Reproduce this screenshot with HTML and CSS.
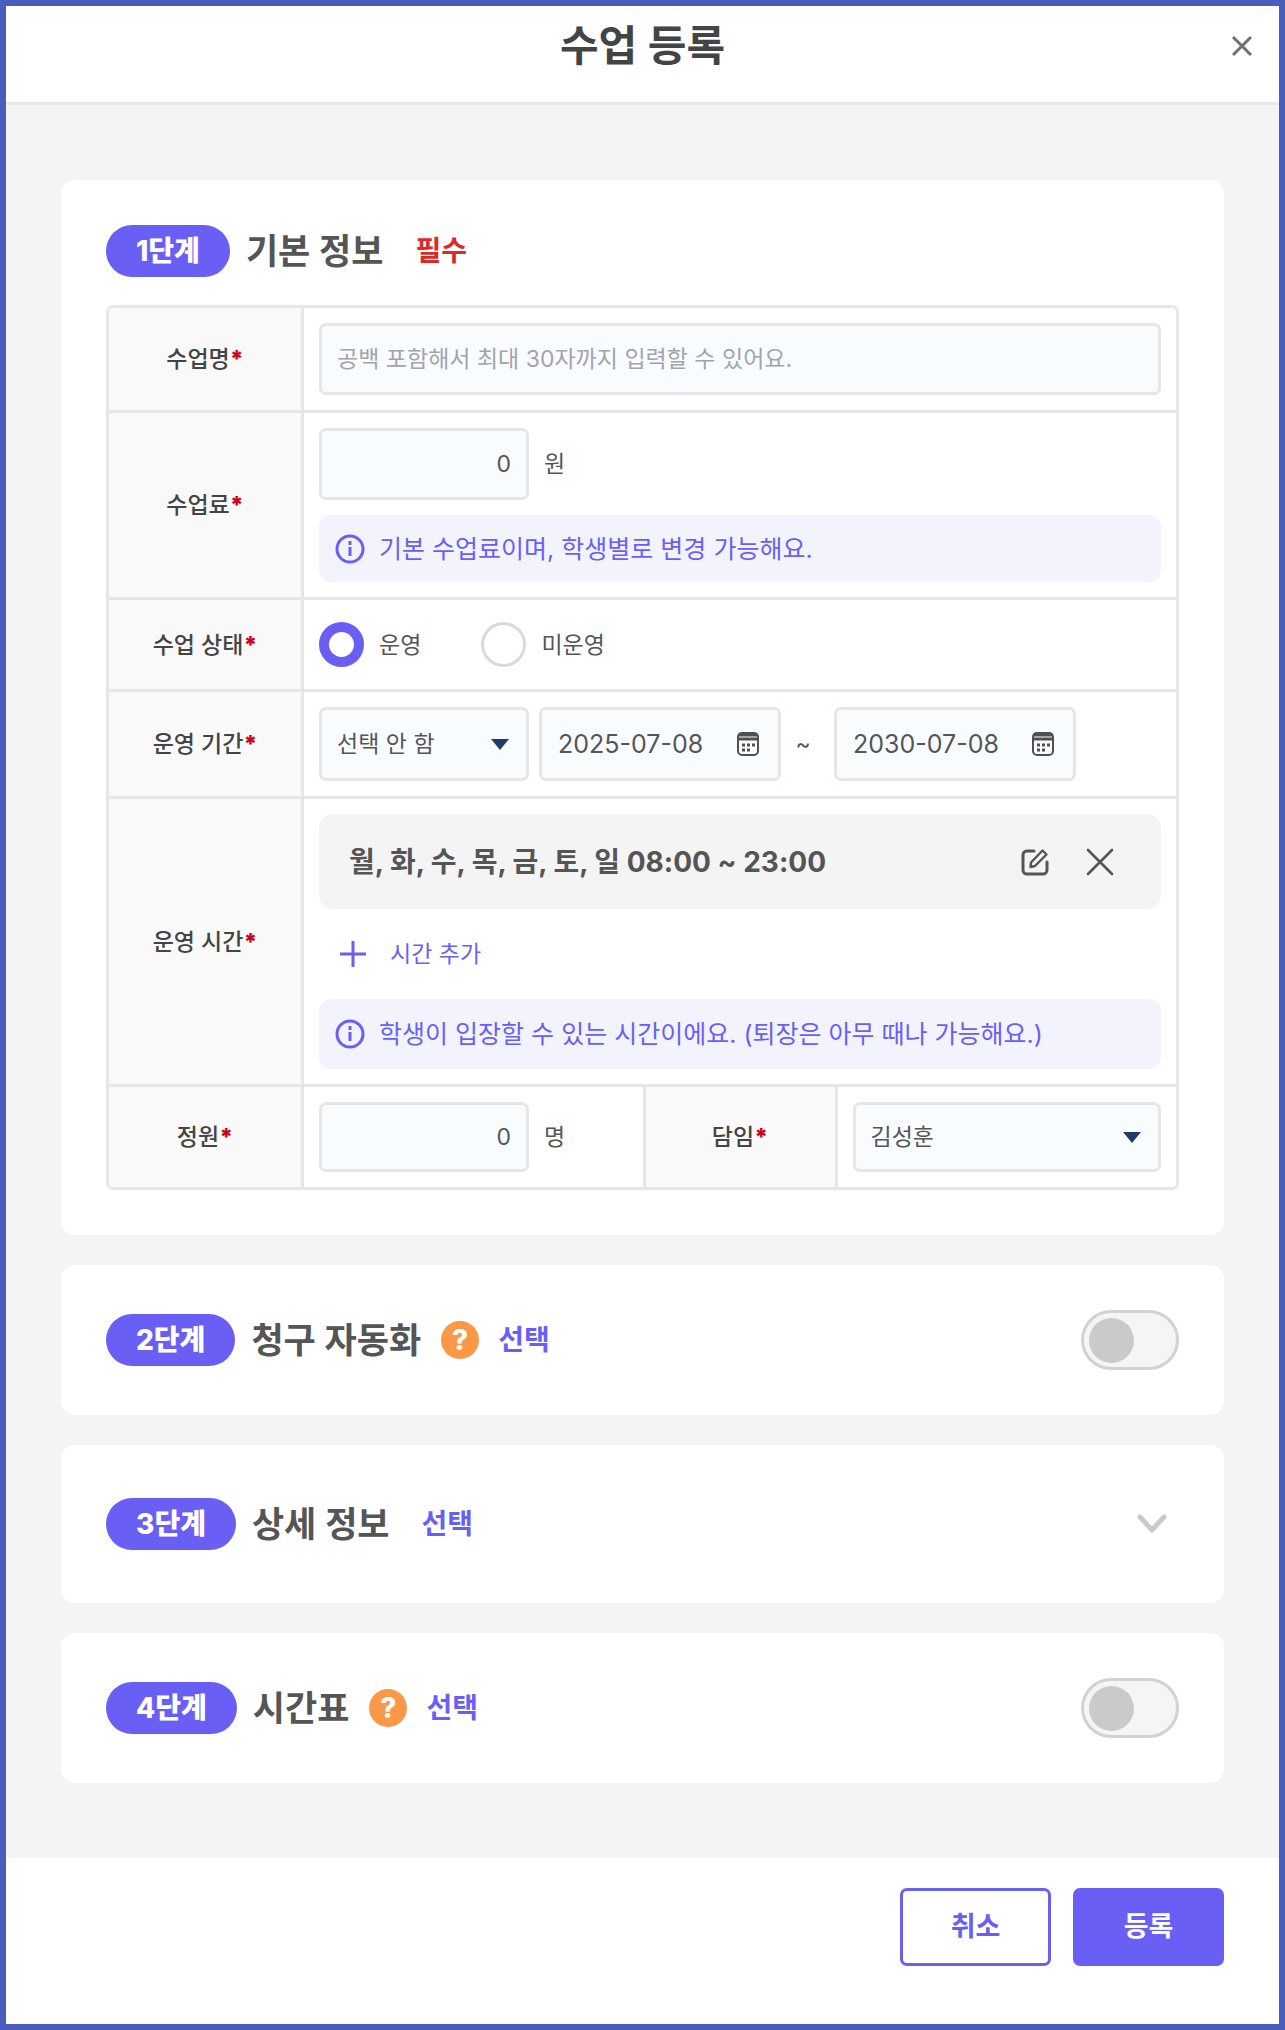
FILE: index.html
```
<!DOCTYPE html>
<html lang="ko">
<head>
    <meta charset="UTF-8">
    <meta name="viewport" content="width=device-width, initial-scale=1.0">
    <title>수업 등록</title>
    <link rel="stylesheet" href="styles.css">
</head>
<body>
    <form class="modal">
        <header class="modal-header">
            <h1>수업 등록</h1>
            <button type="button" class="icon-button close-button" aria-label="닫기">
                <svg width="22" height="22" viewBox="0 0 22 22" fill="none" stroke="#707070" stroke-width="3"><path d="M2 2l18 18M20 2L2 20"/></svg>
            </button>
        </header>

        <main class="modal-body">
            <section class="card">
                <div class="card-header opened">
                    <span class="step">1단계</span>
                    <h2>기본 정보</h2>
                    <span class="tag required">필수</span>
                </div>
                <div class="table-wrap">
                    <table class="form-table">
                        <colgroup>
                            <col class="col-label">
                            <col>
                            <col class="col-label">
                            <col>
                        </colgroup>
                        <tr>
                            <th scope="row"><label for="class-name">수업명<em>*</em></label></th>
                            <td colspan="3"><input type="text" id="class-name" class="field full" placeholder="공백 포함해서 최대 30자까지 입력할 수 있어요."></td>
                        </tr>
                        <tr>
                            <th scope="row"><label for="fee">수업료<em>*</em></label></th>
                            <td colspan="3">
                                <div class="row unit-row">
                                    <input type="text" id="fee" class="field number" value="0">
                                    <span>원</span>
                                </div>
                                <p class="info fee-info">
                                    <svg width="30" height="30" viewBox="0 0 30 30" fill="none" stroke="#6a5ff5" stroke-width="3"><circle cx="15" cy="15" r="13"/><path d="M15 13v9M15 7v4"/></svg>
                                    기본 수업료이며, 학생별로 변경 가능해요.
                                </p>
                            </td>
                        </tr>
                        <tr>
                            <th scope="row">수업 상태<em>*</em></th>
                            <td colspan="3">
                                <div class="row radio-row">
                                    <label class="radio"><input type="radio" name="status" checked>운영</label>
                                    <label class="radio"><input type="radio" name="status">미운영</label>
                                </div>
                            </td>
                        </tr>
                        <tr>
                            <th scope="row"><label for="period">운영 기간<em>*</em></label></th>
                            <td colspan="3">
                                <div class="row period-row">
                                    <div class="select">
                                        <select id="period" class="field tall">
                                            <option>선택 안 함</option>
                                        </select>
                                        <svg width="18" height="11" viewBox="0 0 18 11" fill="#1f3b68"><path d="M0 0h18L9 11z"/></svg>
                                    </div>
                                    <div class="date">
                                        <input type="text" value="2025-07-08" aria-label="시작일">
                                        <button type="button" class="icon-button" aria-label="시작일 선택">
                                            <svg width="24" height="26" viewBox="0 0 24 26" fill="none" stroke="#505050" stroke-width="2"><rect x="2" y="2" width="20" height="22" rx="4"/><path d="M2 4h20M2 8h20" stroke-width="3"/><path d="M6 14h3M11 14h3M16 14h3M6 19h3M11 19h3" stroke-width="3"/></svg>
                                        </button>
                                    </div>
                                    <span class="tilde">~</span>
                                    <div class="date">
                                        <input type="text" value="2030-07-08" aria-label="종료일">
                                        <button type="button" class="icon-button" aria-label="종료일 선택">
                                            <svg width="24" height="26" viewBox="0 0 24 26" fill="none" stroke="#505050" stroke-width="2"><rect x="2" y="2" width="20" height="22" rx="4"/><path d="M2 4h20M2 8h20" stroke-width="3"/><path d="M6 14h3M11 14h3M16 14h3M6 19h3M11 19h3" stroke-width="3"/></svg>
                                        </button>
                                    </div>
                                </div>
                            </td>
                        </tr>
                        <tr>
                            <th scope="row">운영 시간<em>*</em></th>
                            <td colspan="3">
                                <div class="time-item">
                                    <strong>월, 화, 수, 목, 금, 토, 일 08:00 ~ 23:00</strong>
                                    <button type="button" class="icon-button" aria-label="수정">
                                        <svg width="28" height="28" viewBox="0 0 28 28" fill="none" stroke="#555" stroke-width="3" stroke-linejoin="round" stroke-linecap="round"><path d="M13 3H6a4 4 0 0 0-4 4v15a4 4 0 0 0 4 4h16a4 4 0 0 0 4-4v-8"/><path d="M10 14.500L21.500 2.500l4 4L14 18l-4.500 1z" stroke-width="2.400"/></svg>
                                    </button>
                                    <button type="button" class="icon-button" aria-label="삭제">
                                        <svg width="28" height="28" viewBox="0 0 28 28" fill="none" stroke="#555" stroke-width="2.600" stroke-linecap="round"><path d="M2 2l24 24M26 2L2 26"/></svg>
                                    </button>
                                </div>
                                <button type="button" class="add-time">
                                    <svg width="26" height="26" viewBox="0 0 26 26" fill="none" stroke="#6a5ff5" stroke-width="3"><path d="M13 0v26M0 13h26"/></svg>
                                    시간 추가
                                </button>
                                <p class="info">
                                    <svg width="30" height="30" viewBox="0 0 30 30" fill="none" stroke="#6a5ff5" stroke-width="3"><circle cx="15" cy="15" r="13"/><path d="M15 13v9M15 7v4"/></svg>
                                    학생이 입장할 수 있는 시간이에요. (퇴장은 아무 때나 가능해요.)
                                </p>
                            </td>
                        </tr>
                        <tr>
                            <th scope="row"><label for="capacity">정원<em>*</em></label></th>
                            <td>
                                <div class="row unit-row">
                                    <input type="text" id="capacity" class="field number short" value="0">
                                    <span>명</span>
                                </div>
                            </td>
                            <th scope="row" class="inner"><label for="teacher">담임<em>*</em></label></th>
                            <td>
                                <div class="select full">
                                    <select id="teacher" class="field short">
                                        <option>김성훈</option>
                                    </select>
                                    <svg width="18" height="11" viewBox="0 0 18 11" fill="#1f3b68"><path d="M0 0h18L9 11z"/></svg>
                                </div>
                            </td>
                        </tr>
                    </table>
                </div>
            </section>

            <section class="card">
                <div class="card-header">
                    <span class="step">2단계</span>
                    <h2>청구 자동화</h2>
                    <button type="button" class="help" aria-label="청구 자동화 도움말">?</button>
                    <span class="tag">선택</span>
                    <input type="checkbox" class="toggle" aria-label="청구 자동화 사용">
                </div>
            </section>

            <section class="card">
                <div class="card-header folded">
                    <span class="step">3단계</span>
                    <h2>상세 정보</h2>
                    <span class="tag">선택</span>
                    <button type="button" class="icon-button expand" aria-label="펼치기">
                        <svg width="30" height="20" viewBox="0 0 30 20" fill="none" stroke="#c9c9c9" stroke-width="5" stroke-linecap="round" stroke-linejoin="round"><path d="M3 3l12 13L27 3"/></svg>
                    </button>
                </div>
            </section>

            <section class="card">
                <div class="card-header">
                    <span class="step">4단계</span>
                    <h2>시간표</h2>
                    <button type="button" class="help" aria-label="시간표 도움말">?</button>
                    <span class="tag">선택</span>
                    <input type="checkbox" class="toggle" aria-label="시간표 사용">
                </div>
            </section>
        </main>

        <footer class="modal-footer">
            <button type="button" class="button">취소</button>
            <button type="submit" class="button primary">등록</button>
        </footer>
    </form>
</body>
</html>
```
FILE: styles.css
```
/* Global Settings */
* {
    box-sizing: border-box;
    margin: 0;
    padding: 0;
}

body {
    font-family: Inter, 'Noto Sans CJK KR', sans-serif;
    font-size: 23px;
    line-height: 34px;
    color: #555;
}

button,
input,
select {
    font: inherit;
    color: inherit;
}

button {
    cursor: pointer;
}

svg {
    display: block;
    flex-shrink: 0;
}

.modal {
    display: flex;
    flex-direction: column;
    min-height: 100vh;
    border: 6px solid #4a5dbb;
    background-color: #fff;
}

.icon-button {
    border: none;
    background: none;
}

/* Header */
.modal-header {
    display: grid;
    grid-template-columns: 1fr auto 1fr;
    align-items: center;
    padding: 8px 26px 24px;
    border-bottom: 3px solid #e8e8e8;
}

.modal-header h1 {
    grid-column: 2;
    font-size: 42px;
    line-height: 64px;
    font-weight: 600;
    color: #444;
}

.close-button {
    justify-self: end;
}

.modal-body {
    display: flex;
    flex-direction: column;
    flex: 1;
    gap: 30px;
    padding: 75px 55px;
    background-color: #f4f4f4;
}

/* Cards */
.card {
    padding: 45px;
    border-radius: 14px;
    background-color: #fff;
}

.card-header {
    display: flex;
    align-items: center;
    min-height: 60px;
}

.card-header.opened {
    min-height: 50px;
    margin-bottom: 28px;
}

.card-header.folded {
    min-height: 68px;
}

.step {
    padding: 0 30px;
    border-radius: 26px;
    background-color: #6a5ff5;
    color: #fff;
    font-size: 28px;
    line-height: 52px;
    font-weight: 800;
}

.card-header h2 {
    margin-left: 16px;
    font-size: 35px;
    line-height: 52px;
    font-weight: 600;
}

.tag {
    margin-left: 32px;
    font-size: 28px;
    font-weight: 600;
    color: #6a5ff5;
}

.tag.required {
    color: #d92b2b;
}

.help {
    width: 38px;
    height: 38px;
    margin-left: 20px;
    border: none;
    border-radius: 50%;
    background-color: #fb9848;
    color: #fff;
    font-size: 28px;
    font-weight: 800;
    line-height: 38px;
}

.help + .tag {
    margin-left: 19px;
}

.toggle {
    appearance: none;
    display: flex;
    align-items: center;
    width: 98px;
    height: 60px;
    margin-left: auto;
    padding: 0 5px;
    border: 3px solid #d2d2d2;
    border-radius: 30px;
    background-color: #f5f5f5;
}

.toggle::before {
    content: "";
    width: 45px;
    height: 45px;
    border-radius: 50%;
    background-color: #cacaca;
}

.toggle:checked {
    justify-content: flex-end;
    background-color: #6a5ff5;
}

.expand {
    margin-left: auto;
    padding: 12px;
}

/* Form table */
.table-wrap {
    border: 3px solid #e6e6e6;
    border-radius: 7px;
    overflow: hidden;
}

.form-table {
    width: 100%;
    table-layout: fixed;
    border-spacing: 0;
}

.col-label {
    width: 18%;
}

.form-table th {
    background-color: #f9f9f9;
    font-weight: 500;
    color: #444;
}

.form-table td {
    padding: 15px;
    border-left: 3px solid #e6e6e6;
}

.form-table th.inner {
    border-left: 3px solid #e6e6e6;
}

.form-table tr + tr > * {
    border-top: 3px solid #e6e6e6;
}

.form-table em {
    font-style: normal;
    font-weight: 900;
    color: #d0021b;
}

.row {
    display: flex;
    align-items: center;
}

.unit-row {
    gap: 15px;
}

.field {
    display: block;
    width: 210px;
    height: 72px;
    padding: 0 15px;
    border: 3px solid #e6e6e6;
    border-radius: 7px;
    background-color: #f9fcff;
}

.field.tall {
    height: 74px;
}

.field.short {
    height: 70px;
}

.field.full {
    width: 100%;
}

.field.number {
    text-align: right;
}

.field::placeholder {
    color: #a3a3ad;
}

.select {
    position: relative;
}

.select .field {
    appearance: none;
}

.select.full .field {
    width: 100%;
}

.select svg {
    position: absolute;
    top: 50%;
    right: 20px;
    margin-top: -5px;
    pointer-events: none;
}

.info {
    display: flex;
    align-items: center;
    gap: 14px;
    min-height: 70px;
    padding: 0 16px;
    border-radius: 12px;
    background-color: #f3f3fe;
    font-size: 25px;
    color: #6a5ff5;
}

.fee-info {
    min-height: 67px;
    margin-top: 15px;
}

.radio-row {
    gap: 60px;
    padding: 7px 0;
}

.radio {
    display: flex;
    align-items: center;
    gap: 15px;
}

.radio input {
    appearance: none;
    width: 45px;
    height: 45px;
    border: 3px solid #dadada;
    border-radius: 50%;
}

.radio input:checked {
    border: 10px solid #6a5ff5;
}

.period-row {
    gap: 10px;
}

.date {
    display: flex;
    align-items: center;
    width: 242px;
    height: 74px;
    padding: 0 18px 0 16px;
    border: 3px solid #e6e6e6;
    border-radius: 7px;
    background-color: #f9fcff;
}

.date input {
    flex: 1;
    min-width: 0;
    border: none;
    background: none;
    font-size: 25px;
}

.tilde {
    width: 33px;
    padding-right: 9px;
    text-align: center;
}

.time-item {
    display: flex;
    align-items: center;
    gap: 37px;
    height: 95px;
    padding: 0 47px 0 30px;
    border-radius: 14px;
    background-color: #f4f4f4;
}

.time-item strong {
    flex: 1;
    font-size: 28px;
    font-weight: 700;
}

.add-time {
    display: flex;
    align-items: center;
    gap: 24px;
    height: 90px;
    padding: 0 21px;
    border: none;
    background: none;
    color: #6a5ff5;
}

/* Footer */
.modal-footer {
    display: flex;
    justify-content: flex-end;
    gap: 22px;
    padding: 30px 55px 58px;
}

.button {
    width: 151px;
    height: 78px;
    border: 3px solid #6a5ff5;
    border-radius: 7px;
    background-color: #fff;
    font-size: 27px;
    font-weight: 600;
    color: #6a5ff5;
}

.button.primary {
    background-color: #6a5ff5;
    color: #fff;
    font-weight: 700;
}
```
